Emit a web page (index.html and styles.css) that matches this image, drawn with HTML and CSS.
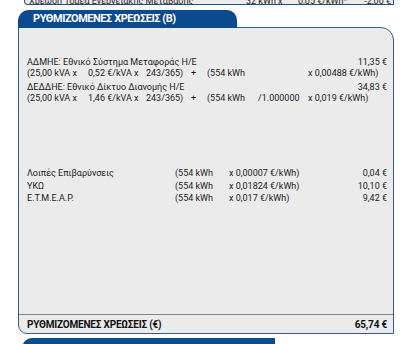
FILE: index.html
```html
<!DOCTYPE html>
<html lang="el">
<head>
<meta charset="utf-8">
<link rel="stylesheet" href="styles.css">
</head>
<body>
<div class="prev">
  <div class="prev-row">
    <span class="p1">Χρέωση Τομέα Ενεργειακής Μετάβασης</span>
    <span class="p2">32 kWh x</span>
    <span class="p3">0,05 €/kWh*</span>
    <span class="p4">-2,00 €</span>
  </div>
</div>
<section class="card">
  <div class="tab">ΡΥΘΜΙΖΟΜΕΝΕΣ ΧΡΕΩΣΕΙΣ (Β)</div>
  <div class="box">
    <div class="group1">
      <div class="label">ΑΔΜΗΕ: Εθνικό Σύστημα Μεταφοράς Η/Ε</div>
      <div class="amt">11,35 €</div>
      <div>(25,00 kVA x</div><div>0,52 €/kVA x</div><div>243/365)</div><div>+</div><div>(554 kWh</div><div></div><div class="last">x 0,00488 €/kWh)</div>
      <div class="label sp">ΔΕΔΔΗΕ: Εθνικό Δίκτυο Διανομής Η/Ε</div>
      <div class="amt sp">34,83 €</div>
      <div>(25,00 kVA x</div><div>1,46 €/kVA x</div><div>243/365)</div><div>+</div><div>(554 kWh</div><div>/1.000000</div><div class="last">x 0,019 €/kWh)</div>
    </div>
    <div class="group2">
      <div>Λοιπές Επιβαρύνσεις</div><div>(554 kWh</div><div>x 0,00007 €/kWh)</div><div class="amt">0,04 €</div>
      <div>ΥΚΩ</div><div>(554 kWh</div><div>x 0,01824 €/kWh)</div><div class="amt">10,10 €</div>
      <div>Ε.Τ.Μ.Ε.Α.Ρ.</div><div>(554 kWh</div><div>x 0,017 €/kWh)</div><div class="amt">9,42 €</div>
    </div>
    <div class="total">
      <span>ΡΥΘΜΙΖΟΜΕΝΕΣ ΧΡΕΩΣΕΙΣ (€)</span>
      <span>65,74 €</span>
    </div>
  </div>
</section>
<div class="next-tab"></div>
</body>
</html>
```
FILE: styles.css
```css
html, body {
  margin: 0;
  padding: 0;
  background: #ffffff;
  font-family: Roboto, "Liberation Sans", sans-serif;
  color: #1b1b1b;
  font-size: 9px;
}

.prev {
  margin-left: 24px;
  width: 368px;
  height: 4px;
  overflow: hidden;
  background: #ebebeb;
  border: 1px solid #1f4f8e;
  border-top: none;
  border-bottom-left-radius: 4px;
  display: flex;
  align-items: flex-end;
}
.prev-row {
  display: grid;
  grid-template-columns: 217px 52px 63px 30px;
  line-height: 11px;
  height: 11px;
  padding-left: 4px;
  margin-bottom: -3px;
  text-decoration: underline;
  width: 100%;
  white-space: nowrap;
}
.prev-row .p4 { text-align: right; }

.card {
  margin-left: 18px;
  width: 376px;
  margin-top: 5px;
}

.tab {
  position: relative;
  z-index: 1;
  width: 204px;
  height: 18px;
  background: #0b4a8e;
  color: #ffffff;
  font-weight: 700;
  font-size: 11px;
  line-height: 18px;
  padding-left: 15px;
  border-radius: 11px 10px 0 0;
  letter-spacing: -0.45px;
  white-space: nowrap;
}

.box {
  margin-top: -1px;
  height: 305px;
  background: #ebebeb;
  border: 1px solid #2c5f9c;
  border-radius: 0 13px 0 9px;
  display: flex;
  flex-direction: column;
}

.group1 {
  margin-top: 29px;
  padding-left: 8px;
  padding-right: 6px;
  display: grid;
  grid-template-columns: 61px 58px 45px 16px 51px 50px 1fr;
  line-height: 11px;
  white-space: nowrap;
}
.group1 .label { grid-column: 1 / 7; }
.group1 .sp { margin-top: 3px; }
.amt { text-align: right; }

.group2 {
  margin-top: 63px;
  padding-left: 8px;
  padding-right: 6px;
  display: grid;
  grid-template-columns: 148px 54px 80px 1fr;
  line-height: 12.5px;
  white-space: nowrap;
}

.total {
  margin-top: auto;
  border-top: 1px solid #7d8794;
  height: 18px;
  display: flex;
  justify-content: space-between;
  align-items: center;
  padding: 0 6px 0 8px;
  font-weight: 700;
  font-size: 10px;
  letter-spacing: -0.2px;
  color: #111111;
}

.next-tab {
  margin-left: 22px;
  margin-top: 4px;
  width: 253px;
  height: 12px;
  background: #0b4a8e;
  border-radius: 10px 0 0 0;
}
```
